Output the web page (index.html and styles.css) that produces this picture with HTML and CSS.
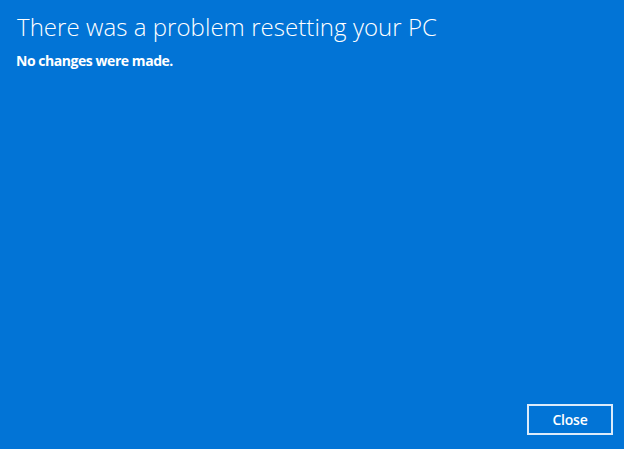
FILE: index.html
```html
<!DOCTYPE html>
<html>
<head>
<meta charset="utf-8">
<link rel="stylesheet" href="styles.css">
</head>
<body>
<div class="screen">
  <div class="content">
    <h1 class="title">There was a problem resetting your PC</h1>
    <p class="subtitle">No changes were made.</p>
  </div>
  <div class="footer">
    <button class="btn">Close</button>
  </div>
</div>
</body>
</html>
```
FILE: styles.css
```css
html, body {
  margin: 0;
  padding: 0;
  width: 624px;
  height: 449px;
  overflow: hidden;
}
.screen {
  width: 624px;
  height: 449px;
  background: #0274d6;
  color: #fff;
  display: flex;
  flex-direction: column;
  box-sizing: border-box;
  padding: 12px 11px 14px 17px;
}
.content {
  flex: 1;
}
.title {
  margin: 0;
  font-family: "Open Sans", "Noto Sans", sans-serif;
  font-weight: 300;
  font-size: 24px;
  line-height: 30px;
  letter-spacing: 0.05px;
}
.subtitle {
  margin: 10px 0 0 -1px;
  font-family: "Open Sans", "Noto Sans", sans-serif;
  font-weight: 700;
  font-size: 14px;
  line-height: 18px;
  letter-spacing: -0.45px;
}
.footer {
  display: flex;
  justify-content: flex-end;
}
.btn {
  width: 86px;
  height: 31px;
  background: transparent;
  border: 2px solid #dcebfa;
  color: #fff;
  font-family: "Open Sans", "Noto Sans", sans-serif;
  font-weight: 600;
  font-size: 14px;
  letter-spacing: -0.2px;
  padding: 0;
}
```
